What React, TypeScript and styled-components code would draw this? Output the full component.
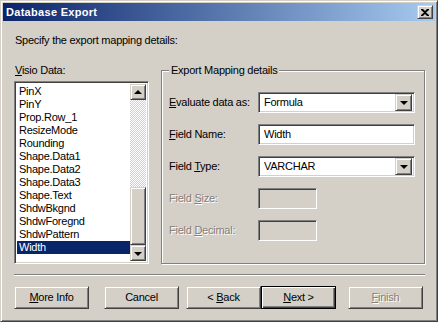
import React from 'react';
import styled, { createGlobalStyle, css } from 'styled-components';

const GlobalStyle = createGlobalStyle`
  html, body {
    margin: 0;
    padding: 0;
    background: #d4d0c8;
  }
  * {
    box-sizing: border-box;
  }
`;

const raised = css`
  border: 1px solid;
  border-color: #d4d0c8 #404040 #404040 #d4d0c8;
  box-shadow: inset 1px 1px #fff, inset -1px -1px #808080;
`;

const sunken = css`
  border: 1px solid;
  border-color: #808080 #fff #fff #808080;
  box-shadow: inset 1px 1px #404040, inset -1px -1px #d4d0c8;
`;

const Window = styled.div`
  width: 438px;
  height: 322px;
  padding: 2px;
  background: #d4d0c8;
  font-family: 'Liberation Sans', Arial, sans-serif;
  font-size: 11px;
  line-height: 13px;
  letter-spacing: -0.25px;
  color: #000;
  ${raised};
  display: flex;
  flex-direction: column;
`;

const TitleBar = styled.div`
  height: 18px;
  flex: 0 0 18px;
  display: flex;
  align-items: center;
  padding: 0 2px 0 2px;
  background: linear-gradient(to right, #0a246a, #a6caf0);
  color: #fff;
  font-weight: bold;
  letter-spacing: 0.3px;
`;

const Title = styled.span`
  flex: 1;
  padding-left: 1px;
`;

const CloseButton = styled.div`
  width: 16px;
  height: 14px;
  ${raised};
  background: #d4d0c8;
  display: flex;
  align-items: center;
  justify-content: center;
`;

const Body = styled.div`
  flex: 1;
  display: flex;
  flex-direction: column;
  padding: 13px 10px 0 11px;
`;

const Heading = styled.div`
  padding-left: 1px;
`;

const MainRow = styled.div`
  display: flex;
  gap: 12px;
  margin-top: 17px;
`;

const ListColumn = styled.div`
  width: 135px;
  display: flex;
  flex-direction: column;
`;

const Label = styled.span<{ $disabled?: boolean }>`
  padding-left: 1px;
  white-space: nowrap;
  ${(p) =>
    p.$disabled &&
    css`
      color: #808080;
      text-shadow: 1px 1px #fff;
    `}
`;

const Key = styled.span`
  text-decoration: underline;
`;

const ListBox = styled.div`
  margin-top: 4px;
  height: 183px;
  padding: 2px;
  background: #fff;
  ${sunken};
  display: flex;
`;

const Items = styled.ul`
  flex: 1;
  margin: 0;
  padding: 1px 0 0 0;
  list-style: none;
  overflow: hidden;
`;

const Item = styled.li<{ $selected?: boolean }>`
  height: 13px;
  padding-left: 2px;
  white-space: nowrap;
  ${(p) =>
    p.$selected &&
    css`
      background: #0a246a;
      color: #fff;
    `}
`;

const ScrollBar = styled.div`
  width: 16px;
  display: flex;
  flex-direction: column;
`;

const ScrollButton = styled.div`
  height: 16px;
  flex: 0 0 16px;
  background: #d4d0c8;
  ${raised};
  display: flex;
  align-items: center;
  justify-content: center;
`;

const Track = styled.div`
  flex: 1;
  display: flex;
  flex-direction: column;
  justify-content: flex-end;
  background-image: repeating-conic-gradient(#d4d0c8 0 25%, #fff 0 50%);
  background-size: 2px 2px;
`;

const Thumb = styled.div`
  height: 58px;
  background: #d4d0c8;
  ${raised};
`;

const Arrow = styled.span<{ $up?: boolean }>`
  width: 0;
  height: 0;
  border-left: 4px solid transparent;
  border-right: 4px solid transparent;
  ${(p) =>
    p.$up
      ? css`
          border-bottom: 4px solid #000;
          margin-top: -1px;
        `
      : css`
          border-top: 4px solid #000;
          margin-top: 1px;
        `}
`;

const GroupBox = styled.div`
  flex: 1;
  margin-top: 6px;
  height: 194px;
  border: 1px solid #808080;
  box-shadow: inset 1px 1px #fff, 1px 1px #fff;
  padding: 0 9px 0 6px;
`;

const Caption = styled.div`
  width: fit-content;
  margin: -7px 0 0 1px;
  padding: 0 2px 0 2px;
  background: #d4d0c8;
`;

const FieldGrid = styled.div`
  margin-top: 15px;
  display: grid;
  grid-template-columns: 90px 157px;
  grid-auto-rows: 21px;
  row-gap: 11px;
  align-items: center;
`;

const Combo = styled.div`
  height: 21px;
  background: #fff;
  ${sunken};
  display: flex;
  align-items: center;
  padding: 2px;
`;

const ComboText = styled.span`
  flex: 1;
  padding-left: 3px;
`;

const DropButton = styled(ScrollButton)`
  width: 17px;
  height: 17px;
  flex: 0 0 17px;
`;

const TextBox = styled.div<{ $disabled?: boolean; $width?: number }>`
  height: 21px;
  width: ${(p) => p.$width ?? 157}px;
  background: ${(p) => (p.$disabled ? '#d4d0c8' : '#fff')};
  ${sunken};
  display: flex;
  align-items: center;
  padding: 0 5px;
`;

const Separator = styled.div`
  margin-top: 10px;
  height: 2px;
  border-top: 1px solid #808080;
  border-bottom: 1px solid #fff;
`;

const ButtonRow = styled.div`
  display: flex;
  margin-top: 10px;
`;

const Button = styled.div<{ $space?: number; $default?: boolean; $disabled?: boolean }>`
  width: 75px;
  height: 23px;
  margin-left: ${(p) => p.$space ?? 0}px;
  background: #d4d0c8;
  display: flex;
  align-items: center;
  justify-content: center;
  ${(p) =>
    p.$default
      ? css`
          border: 1px solid #000;
          box-shadow: inset 1px 1px #fff, inset -1px -1px #404040, inset -2px -2px #808080;
        `
      : raised}
  ${(p) =>
    p.$disabled &&
    css`
      color: #808080;
      text-shadow: 1px 1px #fff;
    `}
`;

const fields = [
  'PinX',
  'PinY',
  'Prop.Row_1',
  'ResizeMode',
  'Rounding',
  'Shape.Data1',
  'Shape.Data2',
  'Shape.Data3',
  'Shape.Text',
  'ShdwBkgnd',
  'ShdwForegnd',
  'ShdwPattern',
  'Width',
];

export default function App() {
  return (
    <>
      <GlobalStyle />
      <Window>
        <TitleBar>
          <Title>Database Export</Title>
          <CloseButton>
            <svg width="8" height="7" viewBox="0 0 8 7">
              <path d="M0 0h2l2 2 2-2h2v1L5 3.5 8 6v1H6L4 5 2 7H0V6l3-2.5L0 1z" fill="#000" />
            </svg>
          </CloseButton>
        </TitleBar>
        <Body>
          <Heading>Specify the export mapping details:</Heading>
          <MainRow>
            <ListColumn>
              <Label>
                <Key>V</Key>isio Data:
              </Label>
              <ListBox>
                <Items>
                  {fields.map((f) => (
                    <Item key={f} $selected={f === 'Width'}>
                      {f}
                    </Item>
                  ))}
                </Items>
                <ScrollBar>
                  <ScrollButton>
                    <Arrow $up />
                  </ScrollButton>
                  <Track>
                    <Thumb />
                  </Track>
                  <ScrollButton>
                    <Arrow />
                  </ScrollButton>
                </ScrollBar>
              </ListBox>
            </ListColumn>
            <GroupBox>
              <Caption>Export Mapping details</Caption>
              <FieldGrid>
                <Label>
                  <Key>E</Key>valuate data as:
                </Label>
                <Combo>
                  <ComboText>Formula</ComboText>
                  <DropButton>
                    <Arrow />
                  </DropButton>
                </Combo>
                <Label>
                  <Key>F</Key>ield Name:
                </Label>
                <TextBox>Width</TextBox>
                <Label>
                  Field <Key>T</Key>ype:
                </Label>
                <Combo>
                  <ComboText>VARCHAR</ComboText>
                  <DropButton>
                    <Arrow />
                  </DropButton>
                </Combo>
                <Label $disabled>
                  Field <Key>S</Key>ize:
                </Label>
                <TextBox $disabled $width={59} />
                <Label $disabled>
                  Field <Key>D</Key>ecimal:
                </Label>
                <TextBox $disabled $width={59} />
              </FieldGrid>
            </GroupBox>
          </MainRow>
          <Separator />
          <ButtonRow>
            <Button>
              <span>
                <Key>M</Key>ore Info
              </span>
            </Button>
            <Button $space={15}>Cancel</Button>
            <Button $space={7}>
              <span>
                &lt; <Key>B</Key>ack
              </span>
            </Button>
            <Button $default>
              <span>
                <Key>N</Key>ext &gt;
              </span>
            </Button>
            <Button $space={12} $disabled>
              <span>
                <Key>F</Key>inish
              </span>
            </Button>
          </ButtonRow>
        </Body>
      </Window>
    </>
  );
}
